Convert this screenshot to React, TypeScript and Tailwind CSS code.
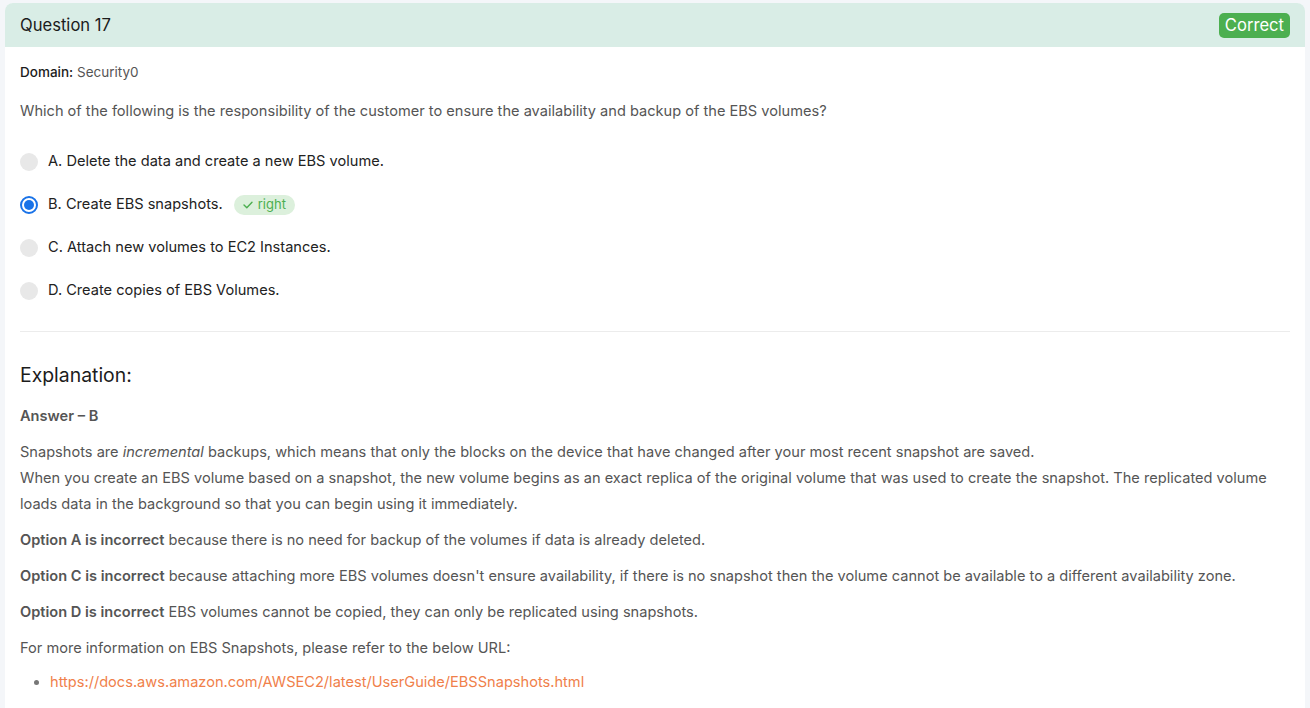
const options = [
  { key: 'A', text: 'Delete the data and create a new EBS volume.' },
  { key: 'B', text: 'Create EBS snapshots.', right: true },
  { key: 'C', text: 'Attach new volumes to EC2 Instances.' },
  { key: 'D', text: 'Create copies of EBS Volumes.' },
];

function Radio({ checked }: { checked?: boolean }) {
  if (checked) {
    return (
      <span className="flex h-[18px] w-[18px] shrink-0 items-center justify-center rounded-full border-[2px] border-[#1a73e8] bg-white">
        <span className="h-[10px] w-[10px] rounded-full bg-[#1a73e8]" />
      </span>
    );
  }
  return <span className="h-[18px] w-[18px] shrink-0 rounded-full bg-[#e8e8e8]" />;
}

export default function App() {
  return (
    <div className="min-h-screen bg-[#f4f6f9] px-[5px] pt-[3px]" style={{ fontFamily: 'Inter, sans-serif' }}>
      <div className="overflow-hidden rounded-t-[8px] bg-white">
        <div className="flex h-[44px] items-center justify-between bg-[#d9ede6] px-[15px]">
          <h2 className="text-[16.6px] text-[#1c1c1c]">Question 17</h2>
          <span className="flex h-[25px] items-center rounded-[5px] bg-[#4caf50] px-[6px] text-[16.6px] text-white">Correct</span>
        </div>

        <div className="px-[15px] pt-[15px] pb-[20px]">
          <div className="h-[20px] text-[13.5px] leading-[20px] text-[#555]">
            <span className="font-medium text-[#1c1c1c]">Domain:</span> Security0
          </div>
          <p className="mt-[19px] h-[20px] text-[14.6px] leading-[20px] text-[#555]">
            Which of the following is the responsibility of the customer to ensure the availability and backup of the EBS volumes?
          </p>

          <div className="mt-[19px] flex flex-col">
            {options.map(o => (
              <div key={o.key} className="flex h-[43px] items-center gap-[10px]">
                <Radio checked={o.right} />
                <span className="text-[14.6px] text-[#222]">
                  {o.key}. {o.text}
                </span>
                {o.right && (
                  <span className="ml-[1px] flex h-[20px] items-center gap-[5px] rounded-full bg-[#dcf0dc] px-[9px] text-[13px] text-[#4caf50]">
                    <svg width="10" height="8" viewBox="0 0 10 8" fill="none">
                      <path d="M1 4l2.8 2.8L9 1.2" stroke="#4caf50" strokeWidth="1.4" strokeLinecap="round" strokeLinejoin="round" />
                    </svg>
                    right
                  </span>
                )}
              </div>
            ))}
          </div>

          <div className="mt-[19px] h-px bg-[#ececec]" />

          <h3 className="mt-[31px] h-[24px] text-[19.4px] leading-[24px] text-[#1c1c1c]">Explanation:</h3>

          <div className="text-[14.6px] text-[#555]">
            <p className="mt-[19px] h-[20px] font-semibold leading-[20px]">Answer – B</p>
            <p className="mt-[13px] leading-[26px]">
              Snapshots are <em>incremental</em> backups, which means that only the blocks on the device that have changed after your most recent snapshot are saved.
              <br />
              When you create an EBS volume based on a snapshot, the new volume begins as an exact replica of the original volume that was used to create the snapshot. The replicated volume loads data in the background so that you can begin using it immediately.
            </p>
            <p className="mt-[10px] leading-[26px]">
              <strong className="font-semibold">Option A is incorrect</strong> because there is no need for backup of the volumes if data is already deleted.
            </p>
            <p className="mt-[10px] leading-[26px]">
              <strong className="font-semibold">Option C is incorrect</strong> because attaching more EBS volumes doesn't ensure availability, if there is no snapshot then the volume cannot be available to a different availability zone.
            </p>
            <p className="mt-[10px] leading-[26px]">
              <strong className="font-semibold">Option D is incorrect</strong> EBS volumes cannot be copied, they can only be replicated using snapshots.
            </p>
            <p className="mt-[10px] leading-[26px]">For more information on EBS Snapshots, please refer to the below URL:</p>
            <ul className="mt-[8px] list-disc pl-[30px] leading-[26px] marker:text-[#777]">
              <li>
                <a href="#" className="text-[#f0804a]">https://docs.aws.amazon.com/AWSEC2/latest/UserGuide/EBSSnapshots.html</a>
              </li>
            </ul>
          </div>
        </div>
      </div>
    </div>
  );
}
